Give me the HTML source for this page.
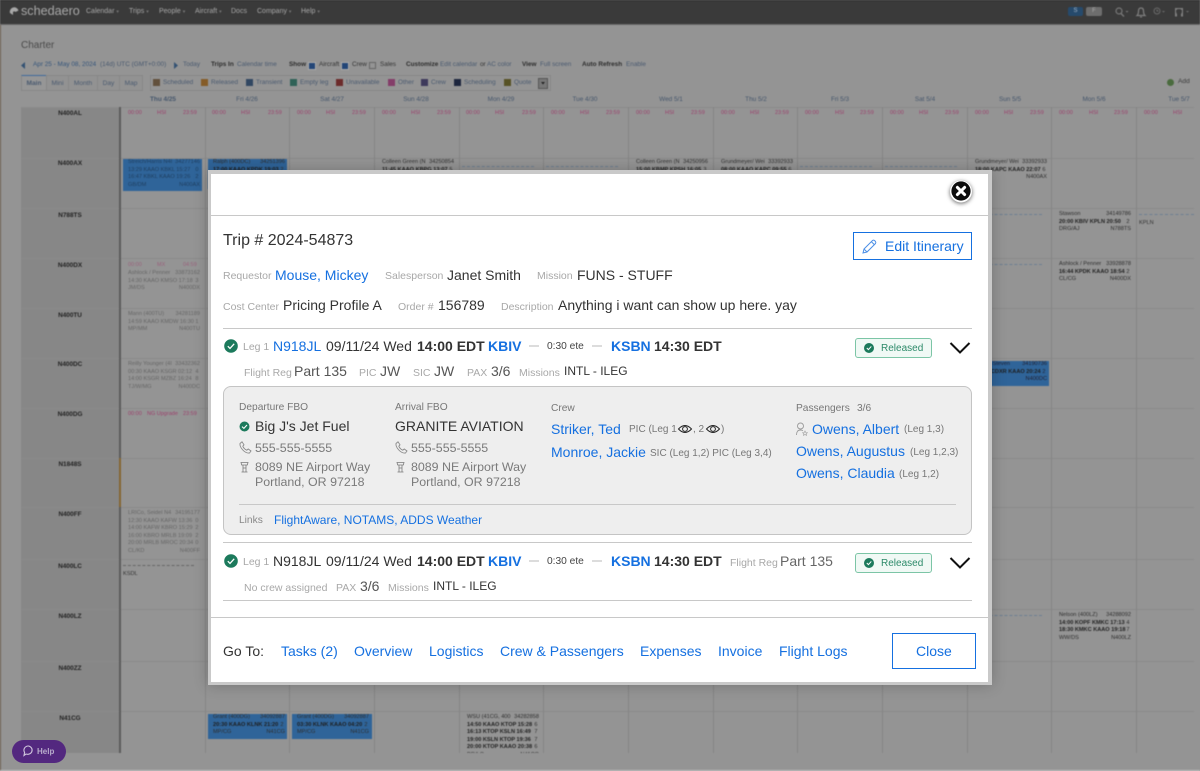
<!DOCTYPE html>
<html><head><meta charset="utf-8"><title>Charter</title>
<style>
html,body{margin:0;padding:0;width:1200px;height:771px;overflow:hidden;background:#949494;font-family:"Liberation Sans",Arial,sans-serif}
#bg{position:absolute;left:0;top:0;width:1200px;height:771px;filter:blur(.45px);overflow:hidden;background:#949494}
.t{position:absolute;white-space:nowrap}
.r{position:absolute}
.n{top:7px;font-size:7px;line-height:10px;color:#a8a8a8}
.n i{font-style:normal;font-size:5px;color:#777}
.tb{top:60px;font-size:6.4px;line-height:10px;color:#4a5a70}
.tb.b{font-weight:bold;color:#2c2c2c}
.tab{top:75px;height:16px;font-size:6.6px;line-height:16px;color:#4a5a70;text-align:center;background:#929292;border:1px solid #878787;box-sizing:border-box}
.sw{position:absolute;top:79px;width:7px;height:7px}
.lg{top:78px;font-size:6.4px;line-height:10px;color:#4a5a70}
.d{top:95px;font-size:6.4px;line-height:10px;color:#45566c;transform:translateX(-50%)}
.p{font-size:5.5px;line-height:8px;color:#9c3f6c}
.rl{left:21px;width:98px;text-align:center;font-size:6.4px;font-weight:bold;line-height:8px;color:#222}
.h{position:absolute;left:21px;width:1173px;height:1px;background:#8a8a8a}
.v{position:absolute;top:107px;height:646px;width:1px;background:#858585}
.ev{position:absolute;width:72px;font-size:5.6px;line-height:7.5px;color:#2e2e2e}
.ev div{display:flex;justify-content:space-between;white-space:nowrap}
.ev b{font-weight:bold;color:#1e1e1e}
.f{color:#666}
.bl{position:absolute;background:#2f6499}
.da{position:absolute;height:0;border-top:1px dashed #6d7f92}
#m{position:absolute;left:208px;top:170px;width:784px;height:515px;background:#c9c9c9;box-shadow:0 0 14px rgba(0,0,0,.22)}
#w{position:absolute;left:211px;top:174px;width:777px;height:508px;background:#fff}
.a{font-size:14px;line-height:20px;color:#333}
.l{font-size:10.5px;line-height:20px;color:#a8a8a8}
.g{font-size:10.2px;line-height:20px;color:#777}
.k{font-size:10px;line-height:20px;color:#777}
.u{color:#1570e0}
.z{font-weight:bold}
.s{font-size:12.4px;line-height:20px;color:#7a7a7a}
.ln{position:absolute;height:1px;background:#c8c8c8}
.bd{position:absolute;left:855px;width:77px;height:20px;box-sizing:border-box;border:1px solid #7cc5a6;border-radius:3px;background:#f0f9f5;color:#2c8a69;font-size:10px;line-height:20px;padding-left:25px}
.dash{position:absolute;width:10px;height:2px;background:#dcdcdc}
svg{position:absolute;overflow:visible}
</style></head><body>
<div id="bg">
<div class="r" style="left:0;top:0;width:1px;height:771px;background:#6e5f50"></div>
<div class="r" style="left:0;top:0;width:1200px;height:24px;background:#3a3a3a"></div>
<div class="r" style="left:0;top:0;width:1200px;height:1px;background:#2a2a2a"></div>
<div class="r" style="left:0;top:24px;width:1200px;height:1px;background:#6a6a6a"></div>
<svg style="left:9px;top:6px" width="11" height="11" viewBox="0 0 11 11"><path d="M1 7 A4.2 4.2 0 0 1 9.5 4.5 L6.5 6 A1.6 1.6 0 0 0 4 6 L4 9 Z" fill="#a8a8a8"/></svg>
<span class="t" style="left:21px;top:3px;font-size:12.6px;line-height:16px;color:#a8a8a8">schedaero</span>
<span class="t n" style="left:86px">Calendar <i>▾</i></span><span class="t n" style="left:129px">Trips <i>▾</i></span><span class="t n" style="left:159px">People <i>▾</i></span><span class="t n" style="left:195px">Aircraft <i>▾</i></span><span class="t n" style="left:231px">Docs</span><span class="t n" style="left:257px">Company <i>▾</i></span><span class="t n" style="left:301px">Help <i>▾</i></span>
<div class="t" style="left:1068px;top:7px;width:15px;height:9px;background:#264a6c;border-radius:2px;font-size:6px;line-height:9px;text-align:center;color:#a8b8c8">S</div>
<div class="t" style="left:1086px;top:7px;width:16px;height:9px;background:#6e6e6e;border-radius:2px;font-size:6px;line-height:9px;text-align:center;color:#aaa">F</div>
<svg style="left:1115px;top:7px" width="14" height="10"><circle cx="4" cy="4" r="3" fill="none" stroke="#777" stroke-width="1.2"/><path d="M6 6.5 L9 9.5" stroke="#777" stroke-width="1.4"/><path d="M10.5 4 h3 l-1.5 1.6z" fill="#777"/></svg>
<svg style="left:1136px;top:7px" width="10" height="11"><path d="M1 8.5 Q2.5 7 2.5 4 Q2.5 1 5 1 Q7.5 1 7.5 4 Q7.5 7 9 8.5 Z" fill="none" stroke="#808080" stroke-width="1.2"/><path d="M4 10 h2" stroke="#808080"/></svg>
<svg style="left:1153px;top:7px" width="14" height="10"><circle cx="4" cy="4" r="3" fill="none" stroke="#6a6a6a"/><path d="M4 2.5 V4 H5.5" stroke="#6a6a6a" fill="none"/><path d="M9 4 h3 l-1.5 1.6z" fill="#6a6a6a"/></svg>
<svg style="left:1174px;top:7px" width="16" height="10"><path d="M1 9.5 V1 H9 V9.5 H7 V7 Q8 6 8 4 Q8 2 5 2 Q2 2 2 4 Q2 6 3 7 V9.5 Z" fill="#808080"/><path d="M12 4 h3 l-1.5 1.6z" fill="#6a6a6a"/></svg>

<span class="t" style="left:21px;top:40px;font-size:10px;line-height:12px;color:#4a4a4a">Charter</span>
<svg style="left:21px;top:62px" width="5" height="7"><path d="M4 0 V7 L0 3.5Z" fill="#345273"/></svg>
<span class="t tb" style="left:33px;color:#35557b">Apr 25 - May 08, 2024</span>
<span class="t tb" style="left:100px">(14d) UTC (GMT+0:00)</span>
<svg style="left:174px;top:62px" width="5" height="7"><path d="M0 0 V7 L4 3.5Z" fill="#345273"/></svg>
<span class="t tb" style="left:183px">Today</span>
<span class="t tb b" style="left:211px">Trips In</span><span class="t tb" style="left:237px">Calendar time</span>
<span class="t tb b" style="left:289px">Show</span>
<div class="r" style="left:308px;top:62px;width:6px;height:6px;background:#234677;border:.5px solid #aaa"></div>
<span class="t tb" style="left:319px;color:#333">Aircraft</span>
<div class="r" style="left:341px;top:62px;width:6px;height:6px;background:#234677;border:.5px solid #aaa"></div>
<span class="t tb" style="left:352px;color:#333">Crew</span>
<div class="r" style="left:369px;top:62px;width:5px;height:5px;border:1px solid #666"></div>
<span class="t tb" style="left:380px;color:#333">Sales</span>
<span class="t tb b" style="left:406px">Customize</span><span class="t tb" style="left:440px">Edit calendar</span><span class="t tb" style="left:480px;color:#333">or</span><span class="t tb" style="left:487px">AC color</span>
<span class="t tb b" style="left:522px">View</span><span class="t tb" style="left:540px">Full screen</span>
<span class="t tb b" style="left:582px">Auto Refresh</span><span class="t tb" style="left:626px">Enable</span>

<div class="t tab" style="left:21px;width:26px;font-weight:bold;border-top:1px solid #3f6a9c;background:#969696">Main</div>
<div class="t tab" style="left:46px;width:23px">Mini</div>
<div class="t tab" style="left:68px;width:30px">Month</div>
<div class="t tab" style="left:97px;width:23px">Day</div>
<div class="t tab" style="left:119px;width:24px">Map</div>
<div class="r" style="left:150px;top:75px;width:401px;height:16px;box-sizing:border-box;border:1px solid #878787"></div>
<div class="sw" style="left:153px;background:#62503c"></div><span class="t lg" style="left:163px">Scheduled</span>
<div class="sw" style="left:201px;background:#855c28"></div><span class="t lg" style="left:211px">Released</span>
<div class="sw" style="left:246px;background:#314762"></div><span class="t lg" style="left:256px">Transient</span>
<div class="sw" style="left:290px;background:#2f6257"></div><span class="t lg" style="left:300px">Empty leg</span>
<div class="sw" style="left:336px;background:#6c2b2b"></div><span class="t lg" style="left:346px">Unavailable</span>
<div class="sw" style="left:388px;background:#843d69"></div><span class="t lg" style="left:398px">Other</span>
<div class="sw" style="left:421px;background:#3e3a5c"></div><span class="t lg" style="left:431px">Crew</span>
<div class="sw" style="left:454px;background:#1d263e"></div><span class="t lg" style="left:464px">Scheduling</span>
<div class="sw" style="left:504px;background:#575225"></div><span class="t lg" style="left:514px">Quote</span>
<div class="r" style="left:538px;top:78px;width:10px;height:11px;background:#777;border:1px solid #555;box-sizing:border-box"></div>
<svg style="left:541px;top:82px" width="5" height="3"><path d="M0 0 H4 L2 2.5Z" fill="#222"/></svg>
<div class="r" style="left:1167px;top:79px;width:7px;height:7px;border-radius:50%;background:#4a6b3e"></div>
<span class="t" style="left:1178px;top:77px;font-size:6.6px;line-height:10px;color:#3a3a3a">Add</span>

<span class="t d" style="left:163px;font-weight:bold">Thu 4/25</span><span class="t d" style="left:247px">Fri 4/26</span><span class="t d" style="left:332px">Sat 4/27</span><span class="t d" style="left:416px">Sun 4/28</span><span class="t d" style="left:501px">Mon 4/29</span><span class="t d" style="left:585px">Tue 4/30</span><span class="t d" style="left:671px">Wed 5/1</span><span class="t d" style="left:756px">Thu 5/2</span><span class="t d" style="left:840px">Fri 5/3</span><span class="t d" style="left:925px">Sat 5/4</span><span class="t d" style="left:1010px">Sun 5/5</span><span class="t d" style="left:1094px">Mon 5/6</span><span class="t d" style="left:1179px">Tue 5/7</span>

<div class="r" style="left:21px;top:107px;width:98px;height:646px;background:#878787"></div>
<div class="h" style="top:107px"></div><div class="h" style="top:158px"></div><div class="h" style="top:208px"></div><div class="h" style="top:258px"></div><div class="h" style="top:308px"></div><div class="h" style="top:358px"></div><div class="h" style="top:408px"></div><div class="h" style="top:458px"></div><div class="h" style="top:507px"></div><div class="h" style="top:559px"></div><div class="h" style="top:609px"></div><div class="h" style="top:661px"></div><div class="h" style="top:711px"></div>
<div class="v" style="left:119px;width:2px;background:#5c5c5c"></div><div class="v" style="left:205px"></div><div class="v" style="left:289px"></div><div class="v" style="left:374px"></div><div class="v" style="left:459px"></div><div class="v" style="left:543px"></div><div class="v" style="left:628px"></div><div class="v" style="left:713px"></div><div class="v" style="left:797px"></div><div class="v" style="left:882px"></div><div class="v" style="left:967px"></div><div class="v" style="left:1051px"></div><div class="v" style="left:1136px"></div>
<div class="r" style="left:119px;top:458px;width:2px;height:49px;background:#856633"></div>

<span class="t rl" style="top:110px">N400AL</span><span class="t rl" style="top:160px">N400AX</span><span class="t rl" style="top:212px">N788TS</span><span class="t rl" style="top:262px">N400DX</span><span class="t rl" style="top:312px">N400TU</span><span class="t rl" style="top:361px">N400DC</span><span class="t rl" style="top:411px">N400DG</span><span class="t rl" style="top:461px">N1848S</span><span class="t rl" style="top:511px">N400FF</span><span class="t rl" style="top:563px">N400LC</span><span class="t rl" style="top:613px">N400LZ</span><span class="t rl" style="top:665px">N400ZZ</span><span class="t rl" style="top:715px">N41CG</span>

<span class="t p" style="left:128px;top:109px">00:00</span><span class="t p" style="left:157px;top:109px">HSI</span><span class="t p" style="left:183px;top:109px">23:59</span>
<span class="t p" style="left:212px;top:109px">00:00</span><span class="t p" style="left:241px;top:109px">HSI</span><span class="t p" style="left:268px;top:109px">23:59</span>
<span class="t p" style="left:297px;top:109px">00:00</span><span class="t p" style="left:326px;top:109px">HSI</span><span class="t p" style="left:352px;top:109px">23:59</span>
<span class="t p" style="left:382px;top:109px">00:00</span><span class="t p" style="left:411px;top:109px">HSI</span><span class="t p" style="left:437px;top:109px">23:59</span>
<span class="t p" style="left:466px;top:109px">00:00</span><span class="t p" style="left:495px;top:109px">HSI</span><span class="t p" style="left:522px;top:109px">23:59</span>
<span class="t p" style="left:551px;top:109px">00:00</span><span class="t p" style="left:580px;top:109px">HSI</span><span class="t p" style="left:606px;top:109px">23:59</span>
<span class="t p" style="left:636px;top:109px">00:00</span><span class="t p" style="left:665px;top:109px">HSI</span><span class="t p" style="left:691px;top:109px">23:59</span>
<span class="t p" style="left:721px;top:109px">00:00</span><span class="t p" style="left:750px;top:109px">HSI</span><span class="t p" style="left:775px;top:109px">23:59</span>
<span class="t p" style="left:805px;top:109px">00:00</span><span class="t p" style="left:835px;top:109px">HSI</span><span class="t p" style="left:860px;top:109px">23:59</span>
<span class="t p" style="left:890px;top:109px">00:00</span><span class="t p" style="left:919px;top:109px">HSI</span><span class="t p" style="left:945px;top:109px">23:59</span>
<span class="t p" style="left:975px;top:109px">00:00</span><span class="t p" style="left:1004px;top:109px">HSI</span><span class="t p" style="left:1030px;top:109px">23:59</span>
<span class="t p" style="left:1059px;top:109px">00:00</span><span class="t p" style="left:1089px;top:109px">HSI</span><span class="t p" style="left:1114px;top:109px">23:59</span>
<span class="t p" style="left:1144px;top:109px">00:00</span><span class="t p" style="left:1173px;top:109px">HSI</span>

<div class="bl" style="left:123px;top:159px;width:79px;height:32px"></div>
<div class="ev f" style="left:128px;top:159px;color:#1f3f60"><div><span>Streich/Harris N4I</span><span>34277146</span></div><div><span>13:29 KAAO KBKL 15:27</span><span>0&nbsp;</span></div><div><span>16:47 KBKL KAAO 19:26</span><span>2&nbsp;</span></div><div><span>GB/DM</span><span>N400AX</span></div></div>
<div class="bl" style="left:208px;top:159px;width:79px;height:30px"></div>
<div class="ev" style="left:213px;top:159px"><div><span>Ralph (400DC)</span><span>34251396</span></div><div><b>17:00 KAAO KPDK 19:03</b><span>2&nbsp;</span></div></div>
<div class="ev" style="left:382px;top:159px"><div><span>Colleen Green (N</span><span>34250854</span></div><div><b>11:45 KAAO KBPG 13:07</b><span>5&nbsp;</span></div></div>
<div class="ev" style="left:636px;top:159px"><div><span>Colleen Green (N</span><span>34250956</span></div><div><b>15:00 KBMP KPSH 16:05</b><span>3&nbsp;</span></div></div>
<div class="ev" style="left:721px;top:159px"><div><span>Grundmeyer/ Wei</span><span>33392933</span></div><div><b>08:00 KAAO KAPC 09:55</b><span>6&nbsp;</span></div></div>
<div class="ev" style="left:975px;top:159px"><div><span>Grundmeyer/ Wei</span><span>33392933</span></div><div><b>18:00 KAPC KAAO 22:07</b><span>6&nbsp;</span></div><div><span></span><span>N400AX</span></div></div>
<div class="da" style="left:462px;top:166px;width:72px"></div><div class="da" style="left:546px;top:166px;width:72px"></div><div class="da" style="left:800px;top:166px;width:72px"></div><div class="da" style="left:885px;top:166px;width:72px"></div>
<div class="da" style="left:970px;top:214px;width:72px"></div><div class="da" style="left:1139px;top:214px;width:55px"></div><div class="da" style="left:970px;top:264px;width:72px"></div><div class="da" style="left:970px;top:615px;width:72px"></div><div class="da" style="left:123px;top:565px;width:71px;border-color:#666"></div>
<div class="ev" style="left:1059px;top:211px"><div><span>Stawson</span><span>34149786</span></div><div><b>20:00 KBIV KPLN 20:50</b><span>2&nbsp;</span></div><div><span>DRG/AJ</span><span>N788TS</span></div></div>
<span class="t" style="left:1139px;top:219px;font-size:5.6px;line-height:8px;color:#333">KPLN</span>
<span class="t p" style="left:128px;top:261px;opacity:.6">00:00</span><span class="t p" style="left:157px;top:261px;opacity:.6">MX</span><span class="t p" style="left:183px;top:261px;opacity:.6">04:59</span>
<div class="ev f" style="left:128px;top:270px"><div><span>Ashlock / Penner</span><span>33873162</span></div><div><span>14:30 KAAO KMSO 17:18</span><span>3&nbsp;</span></div><div><span>JM/DS</span><span>N400DX</span></div></div>
<div class="ev" style="left:1059px;top:261px"><div><span>Ashlock / Penner</span><span>33928878</span></div><div><b>16:44 KPDK KAAO 18:54</b><span>2&nbsp;</span></div><div><span>CL/CG</span><span>N400DX</span></div></div>
<div class="ev f" style="left:128px;top:311px"><div><span>Mann (400TU)</span><span>34281189</span></div><div><span>14:59 KAAO KMDW 16:30</span><span>1&nbsp;</span></div><div><span>MP/MM</span><span>N400TU</span></div></div>
<div class="ev f" style="left:128px;top:361px"><div><span>Reilly Younger (4I</span><span>33432362</span></div><div><span>00:30 KAAO KSGR 02:12</span><span>4&nbsp;</span></div><div><span>14:00 KSGR MZBZ 16:24</span><span>8&nbsp;</span></div><div><span>TJ/W/MG</span><span>N400DC</span></div></div>
<div class="bl" style="left:970px;top:361px;width:79px;height:25px"></div>
<div class="ev" style="left:975px;top:361px;color:#223"><div><span>Young-Steven</span><span>34190736</span></div><div><b>19:00 CDXR KAAO 20:24</b><span>2&nbsp;</span></div><div><span></span><span>N400DC</span></div></div>
<span class="t p" style="left:128px;top:410px">00:00</span><span class="t p" style="left:147px;top:410px">NG Upgrade</span><span class="t p" style="left:183px;top:410px">23:59</span>
<div class="ev f" style="left:128px;top:510px"><div><span>LRICo, Seidel N4</span><span>34195177</span></div><div><span>12:30 KAAO KAFW 13:36</span><span>0&nbsp;</span></div><div><span>14:00 KAFW KBRO 15:29</span><span>2&nbsp;</span></div><div><span>16:00 KBRO MRLB 19:09</span><span>2&nbsp;</span></div><div><span>20:00 MRLB MROC 20:34</span><span>0&nbsp;</span></div><div><span>CL/KD</span><span>N400FF</span></div></div>
<span class="t" style="left:123px;top:570px;font-size:5.6px;line-height:8px;color:#333">KSDL</span>
<div class="ev" style="left:1059px;top:612px"><div><span>Nelson (400LZ)</span><span>34288092</span></div><div><b>14:00 KOPF KMKC 17:13</b><span>4&nbsp;</span></div><div><b>18:30 KMKC KAAO 19:18</b><span>7&nbsp;</span></div><div><span>WW/DS</span><span>N400LZ</span></div></div>
<div class="bl" style="left:208px;top:714px;width:79px;height:25px"></div>
<div class="ev" style="left:213px;top:714px"><div><span>Grant (400DG)</span><span>34092887</span></div><div><b>20:30 KAAO KLNK 21:20</b><span>2&nbsp;</span></div><div><span>MP/CG</span><span>N41CG</span></div></div>
<div class="bl" style="left:292px;top:714px;width:80px;height:25px"></div>
<div class="ev" style="left:297px;top:714px"><div><span>Grant (400DG)</span><span>34092887</span></div><div><b>03:30 KLNK KAAO 04:20</b><span>2&nbsp;</span></div><div><span>MP/CG</span><span>N41CG</span></div></div>
<div class="ev" style="left:467px;top:714px;height:39px;overflow:hidden"><div><span>WSU (41CG, 400</span><span>34282858</span></div><div><b>14:50 KAAO KTOP 15:28</b><span>6&nbsp;</span></div><div><b>16:13 KTOP KSLN 16:49</b><span>7&nbsp;</span></div><div><b>19:00 KSLN KTOP 19:36</b><span>7&nbsp;</span></div><div><b>20:00 KTOP KAAO 20:38</b><span>6&nbsp;</span></div><div><span>DR/LG</span><span>N41CG</span></div></div>
<div class="r" style="left:0;top:770px;width:1200px;height:1px;background:#c4c4c4"></div>
</div>

<div class="r" style="left:12px;top:740px;width:54px;height:23px;border-radius:12px;background:#53287f"></div>
<svg style="left:23px;top:745px" width="11" height="12"><path d="M5.5 1 A4.4 4.2 0 1 1 3 9 L1 10.5 L1.6 7.4 A4.4 4.2 0 0 1 5.5 1Z" fill="none" stroke="#cfc4dc" stroke-width="1.1"/></svg>
<span class="t" style="left:37px;top:746px;font-size:8px;font-weight:bold;line-height:11px;color:#b8accb">Help</span>

<div id="m"></div><div id="w"></div>
<div class="ln" style="left:211px;top:215px;width:777px"></div>
<svg style="left:949px;top:179px" width="24" height="24"><circle cx="12" cy="12.5" r="11" fill="#fff" style="filter:drop-shadow(0 1px 2px rgba(0,0,0,.6))"/><circle cx="12" cy="12" r="9.6" fill="#0c0c0c"/><path d="M8.4 8.4 L15.6 15.6 M15.6 8.4 L8.4 15.6" stroke="#fff" stroke-width="3" stroke-linecap="round"/></svg>

<span class="t" style="left:223px;top:230px;font-size:16px;line-height:22px;color:#333">Trip # 2024-54873</span>
<div class="r" style="left:853px;top:232px;width:119px;height:28px;box-sizing:border-box;border:1px solid #1570e0"></div>
<svg style="left:862px;top:239px" width="15" height="15" viewBox="0 0 15 15"><path d="M1 14 L2 10 L10.5 1.5 Q11.5 .8 12.5 1.5 L13.5 2.5 Q14.2 3.5 13.5 4.5 L5 13 Z M9.5 2.8 L12.2 5.5 M2 10 L5 13" fill="none" stroke="#4a8ee6" stroke-width="1"/></svg>
<span class="t a u" style="left:885px;top:236px">Edit Itinerary</span>

<span class="t l" style="left:223px;top:266px">Requestor</span><span class="t a u" style="left:275px;top:265px">Mouse, Mickey</span>
<span class="t l" style="left:385px;top:266px">Salesperson</span><span class="t a" style="left:447px;top:265px">Janet Smith</span>
<span class="t l" style="left:537px;top:266px">Mission</span><span class="t a" style="left:577px;top:265px">FUNS - STUFF</span>
<span class="t l" style="left:223px;top:297px">Cost Center</span><span class="t a" style="left:283px;top:295px">Pricing Profile A</span>
<span class="t l" style="left:398px;top:297px">Order #</span><span class="t a" style="left:438px;top:295px">156789</span>
<span class="t l" style="left:501px;top:297px">Description</span><span class="t a" style="left:558px;top:295px">Anything i want can show up here. yay</span>

<div class="ln" style="left:223px;top:328px;width:749px"></div>
<svg style="left:224px;top:339px" width="14" height="14"><circle cx="7" cy="7" r="6.8" fill="#1c7a5c"/><path d="M3.8 7.2 L6 9.4 L10.2 4.8" fill="none" stroke="#fff" stroke-width="1.3"/></svg>
<span class="t l" style="left:243px;top:337px">Leg 1</span>
<span class="t a u" style="left:273px;top:336px">N918JL</span>
<span class="t a" style="left:326px;top:336px">09/11/24 Wed</span>
<span class="t a z" style="left:417px;top:336px">14:00 EDT</span>
<span class="t a u z" style="left:488px;top:336px">KBIV</span>
<div class="dash" style="left:529px;top:345px"></div>
<span class="t" style="left:547px;top:337px;font-size:10.2px;line-height:20px;color:#444">0:30 ete</span>
<div class="dash" style="left:592px;top:345px"></div>
<span class="t a u z" style="left:611px;top:336px">KSBN</span>
<span class="t a z" style="left:654px;top:336px">14:30 EDT</span>
<div class="bd" style="top:338px">Released</div>
<svg style="left:864px;top:343px" width="10" height="10"><circle cx="5" cy="5" r="5" fill="#1c7a5c"/><path d="M2.8 5 L4.4 6.6 L7.3 3.4" fill="none" stroke="#fff" stroke-width="1"/></svg>
<svg style="left:949px;top:341px" width="22" height="14"><path d="M1.5 2 L11 11.5 L20.5 2" fill="none" stroke="#111" stroke-width="2"/></svg>

<span class="t l" style="left:244px;top:363px">Flight Reg</span><span class="t a" style="left:294px;top:361px;color:#555">Part 135</span>
<span class="t l" style="left:359px;top:363px">PIC</span><span class="t a" style="left:380px;top:361px;color:#555">JW</span>
<span class="t l" style="left:413px;top:363px">SIC</span><span class="t a" style="left:434px;top:361px;color:#555">JW</span>
<span class="t l" style="left:467px;top:363px">PAX</span><span class="t a" style="left:491px;top:361px;color:#555">3/6</span>
<span class="t l" style="left:519px;top:363px">Missions</span><span class="t a" style="left:564px;top:361px;font-size:12px">INTL - ILEG</span>

<div class="r" style="left:223px;top:386px;width:749px;height:149px;box-sizing:border-box;background:#eee;border:1px solid #c4c4c4;border-radius:8px"></div>
<span class="t g" style="left:239px;top:398px">Departure FBO</span>
<span class="t g" style="left:395px;top:398px">Arrival FBO</span>
<span class="t g" style="left:551px;top:399px">Crew</span>
<span class="t g" style="left:796px;top:399px">Passengers</span><span class="t g" style="left:857px;top:399px">3/6</span>
<svg style="left:239px;top:421px" width="11" height="11"><circle cx="5.5" cy="5.5" r="5" fill="#1c7a5c"/><path d="M3 5.6 L4.9 7.4 L8 4" fill="none" stroke="#fff" stroke-width="1.1"/></svg>
<span class="t a" style="left:255px;top:416px">Big J's Jet Fuel</span>
<span class="t a" style="left:395px;top:416px">GRANITE AVIATION</span>
<svg style="left:239px;top:441px" width="13" height="13" viewBox="0 0 13 13"><path d="M1 2.5 L3 .8 L5 3.8 L3.8 5.2 Q5 8 7.8 9.2 L9.2 8 L12 10 L10.5 12 Q7 12.5 3.8 9 Q.5 5.5 1 2.5Z" fill="none" stroke="#8a8a8a" stroke-width=".9"/></svg>
<span class="t s" style="left:255px;top:438px">555-555-5555</span>
<svg style="left:395px;top:441px" width="13" height="13" viewBox="0 0 13 13"><path d="M1 2.5 L3 .8 L5 3.8 L3.8 5.2 Q5 8 7.8 9.2 L9.2 8 L12 10 L10.5 12 Q7 12.5 3.8 9 Q.5 5.5 1 2.5Z" fill="none" stroke="#8a8a8a" stroke-width=".9"/></svg>
<span class="t s" style="left:411px;top:438px">555-555-5555</span>
<svg style="left:240px;top:461px" width="9" height="12" viewBox="0 0 9 12"><path d="M1 1.5 H8 L7.3 4 H1.7 Z M3 4 V11 H6 V4 M3 7 H6 M1.5 11 H7.5" fill="none" stroke="#7a7a7a" stroke-width=".8"/></svg>
<span class="t s" style="left:255px;top:457px">8089 NE Airport Way</span>
<span class="t s" style="left:255px;top:472px">Portland, OR 97218</span>
<svg style="left:396px;top:461px" width="9" height="12" viewBox="0 0 9 12"><path d="M1 1.5 H8 L7.3 4 H1.7 Z M3 4 V11 H6 V4 M3 7 H6 M1.5 11 H7.5" fill="none" stroke="#7a7a7a" stroke-width=".8"/></svg>
<span class="t s" style="left:411px;top:457px">8089 NE Airport Way</span>
<span class="t s" style="left:411px;top:472px">Portland, OR 97218</span>

<span class="t a u" style="left:551px;top:419px">Striker, Ted</span>
<span class="t k" style="left:629px;top:420px">PIC (Leg 1</span>
<svg style="left:678px;top:424px" width="14" height="10" viewBox="0 0 14 10"><path d="M.5 5 Q7 -2 13.5 5 Q7 12 .5 5Z" fill="none" stroke="#222" stroke-width="1"/><circle cx="7" cy="5" r="2.4" fill="none" stroke="#222" stroke-width="1"/></svg>
<span class="t k" style="left:693px;top:420px">, 2</span>
<svg style="left:706px;top:424px" width="14" height="10" viewBox="0 0 14 10"><path d="M.5 5 Q7 -2 13.5 5 Q7 12 .5 5Z" fill="none" stroke="#222" stroke-width="1"/><circle cx="7" cy="5" r="2.4" fill="none" stroke="#222" stroke-width="1"/></svg>
<span class="t k" style="left:721px;top:420px">)</span>
<span class="t a u" style="left:551px;top:442px">Monroe, Jackie</span>
<span class="t k" style="left:650px;top:444px">SIC (Leg 1,2) PIC (Leg 3,4)</span>

<svg style="left:796px;top:422px" width="12" height="14" viewBox="0 0 12 14"><circle cx="4.5" cy="4" r="3" fill="none" stroke="#9a9a9a" stroke-width=".9"/><path d="M.5 13 Q.5 8 4.5 8 Q6 8 7 8.8" fill="none" stroke="#9a9a9a" stroke-width=".9"/><path d="M9 9 L9.7 10.5 L11.4 10.7 L10.1 11.8 L10.5 13.4 L9 12.5 L7.5 13.4 L7.9 11.8 L6.6 10.7 L8.3 10.5Z" fill="none" stroke="#9a9a9a" stroke-width=".6"/></svg>
<span class="t a u" style="left:812px;top:419px">Owens, Albert</span><span class="t k" style="left:904px;top:420px">(Leg 1,3)</span>
<span class="t a u" style="left:796px;top:441px">Owens, Augustus</span><span class="t k" style="left:910px;top:443px">(Leg 1,2,3)</span>
<span class="t a u" style="left:796px;top:463px">Owens, Claudia</span><span class="t k" style="left:899px;top:465px">(Leg 1,2)</span>

<div class="ln" style="left:239px;top:504px;width:717px"></div>
<span class="t g" style="left:239px;top:511px;color:#888">Links</span>
<span class="t u" style="left:274px;top:510px;font-size:12px;line-height:20px">FlightAware, NOTAMS, ADDS Weather</span>

<div class="ln" style="left:223px;top:542px;width:749px"></div>
<svg style="left:224px;top:554px" width="14" height="14"><circle cx="7" cy="7" r="6.8" fill="#1c7a5c"/><path d="M3.8 7.2 L6 9.4 L10.2 4.8" fill="none" stroke="#fff" stroke-width="1.3"/></svg>
<span class="t l" style="left:243px;top:552px">Leg 1</span>
<span class="t a" style="left:273px;top:551px">N918JL</span>
<span class="t a" style="left:326px;top:551px">09/11/24 Wed</span>
<span class="t a z" style="left:417px;top:551px">14:00 EDT</span>
<span class="t a u z" style="left:488px;top:551px">KBIV</span>
<div class="dash" style="left:529px;top:560px"></div>
<span class="t" style="left:547px;top:552px;font-size:10.2px;line-height:20px;color:#444">0:30 ete</span>
<div class="dash" style="left:592px;top:560px"></div>
<span class="t a u z" style="left:611px;top:551px">KSBN</span>
<span class="t a z" style="left:654px;top:551px">14:30 EDT</span>
<span class="t l" style="left:730px;top:553px">Flight Reg</span><span class="t a" style="left:780px;top:551px;color:#666">Part 135</span>
<div class="bd" style="top:553px">Released</div>
<svg style="left:864px;top:558px" width="10" height="10"><circle cx="5" cy="5" r="5" fill="#1c7a5c"/><path d="M2.8 5 L4.4 6.6 L7.3 3.4" fill="none" stroke="#fff" stroke-width="1"/></svg>
<svg style="left:949px;top:556px" width="22" height="14"><path d="M1.5 2 L11 11.5 L20.5 2" fill="none" stroke="#111" stroke-width="2"/></svg>

<span class="t l" style="left:244px;top:578px">No crew assigned</span>
<span class="t l" style="left:336px;top:578px">PAX</span><span class="t a" style="left:360px;top:576px;color:#555">3/6</span>
<span class="t l" style="left:388px;top:578px">Missions</span><span class="t a" style="left:433px;top:576px;font-size:12px">INTL - ILEG</span>
<div class="ln" style="left:223px;top:600px;width:749px"></div>
<div class="ln" style="left:211px;top:617px;width:777px"></div>

<span class="t a" style="left:223px;top:641px">Go To:</span>
<span class="t a u" style="left:281px;top:641px">Tasks (2)</span>
<span class="t a u" style="left:354px;top:641px">Overview</span>
<span class="t a u" style="left:429px;top:641px">Logistics</span>
<span class="t a u" style="left:500px;top:641px">Crew &amp; Passengers</span>
<span class="t a u" style="left:640px;top:641px">Expenses</span>
<span class="t a u" style="left:718px;top:641px">Invoice</span>
<span class="t a u" style="left:779px;top:641px">Flight Logs</span>
<div class="r" style="left:892px;top:633px;width:84px;height:36px;box-sizing:border-box;border:1px solid #1570e0"></div>
<span class="t a u" style="left:916px;top:641px">Close</span>
</body></html>
